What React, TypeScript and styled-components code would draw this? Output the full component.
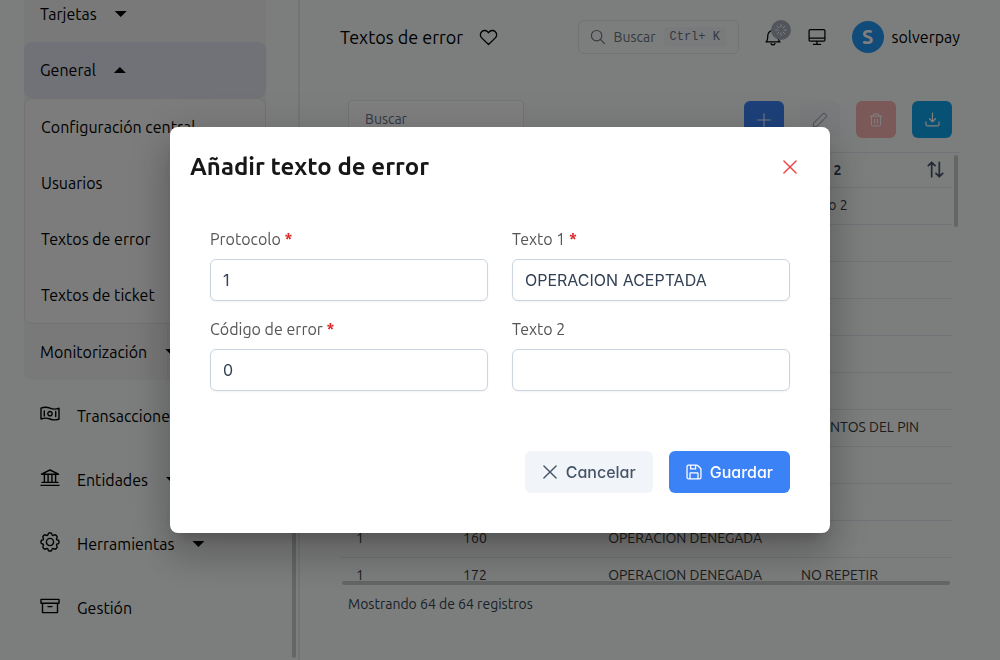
import React from 'react';
import styled, { createGlobalStyle, css } from 'styled-components';

const ui = `'Ubuntu', 'Noto Sans', sans-serif`;
const inter = `'Inter', sans-serif`;

const GlobalStyle = createGlobalStyle`
  *, *::before, *::after { box-sizing: border-box; }
  html, body, #root { height: 100%; }
  body { margin: 0; overflow: hidden; background: #f9fcfa; color: #000; font: 16px/24px ${ui}; }
  button, input { font: inherit; color: inherit; }
`;

const Page = styled.div`
  display: flex;
  height: 100%;
  overflow: hidden;
`;

const Sidebar = styled.aside`
  display: flex;
  flex: 0 0 300px;
  border-right: 2px solid #e9ebeb;
`;

const Nav = styled.nav`
  flex: 1;
  padding: 0 26px 0 24px;
  overflow: hidden;
`;

const SideTrack = styled.div`
  display: flex;
  flex-direction: column;
  justify-content: flex-end;
  width: 6px;
  padding-bottom: 2px;
`;

const SideThumb = styled.div`
  width: 4px;
  height: 20%;
  min-height: 180px;
  border-radius: 2px;
  background: #c8caca;
`;

const Group = styled.div`
  margin-bottom: 8px;
  background: #f3f3f3;
  border-radius: 0 0 8px 8px;
`;

const NavItem = styled.button<{ $active?: boolean; $first?: boolean }>`
  display: flex;
  align-items: center;
  gap: 18px;
  width: 100%;
  height: 56px;
  padding: 0 16px;
  border: 0;
  border-radius: 8px;
  background: ${(p) => (p.$active ? '#e0e5f0' : 'transparent')};
  text-align: left;
  ${(p) =>
    p.$first &&
    css`
      height: 42px;
      padding-bottom: 14px;
    `}
`;

const SubMenu = styled.div`
  border: 1px solid #e8e3e3;
  border-radius: 8px;
  background: #f9f9f9;
`;

const SubLink = styled.a`
  display: flex;
  align-items: center;
  height: 56px;
  padding: 0 16px;
  color: inherit;
  text-decoration: none;
`;

const MainItem = styled(NavItem)`
  margin-bottom: 8px;
`;

const NavIcon = styled.span`
  display: flex;
  width: 19px;
  padding-bottom: 4px;
`;

const Caret = styled.span<{ $up?: boolean }>`
  width: 12px;
  height: 6px;
  background: #000;
  clip-path: ${(p) => (p.$up ? 'polygon(0 100%, 50% 0, 100% 100%)' : 'polygon(0 0, 100% 0, 50% 100%)')};
`;

const Main = styled.main`
  flex: 1;
  min-width: 0;
  padding: 0 40px;
`;

const Header = styled.header`
  display: flex;
  align-items: center;
  height: 74px;
`;

const Heading = styled.h1`
  margin: 0 16px 0 0;
  font-size: 18px;
  font-weight: 400;
  white-space: nowrap;
`;

const IconButton = styled.button<{ $danger?: boolean }>`
  display: flex;
  padding: 0;
  border: 0;
  background: none;
  color: ${(p) => (p.$danger ? '#ef4444' : 'inherit')};
`;

const Search = styled.button`
  display: flex;
  align-items: center;
  gap: 8px;
  width: 161px;
  height: 34px;
  margin-left: auto;
  padding: 0 11px;
  border: 1px solid #e2e8e8;
  border-radius: 6px;
  background: transparent;
  color: #6b7280;
  font-size: 14px;
`;

const Keys = styled.kbd`
  padding: 0 6px;
  border-radius: 4px;
  background: #f3f4f6;
  font: 12px/20px 'Liberation Mono', monospace;
  white-space: pre;
`;

const Bell = styled(IconButton)`
  position: relative;
  margin: 0 26px 0 25px;
`;

const Badge = styled.span`
  position: absolute;
  top: -8px;
  right: -9px;
  display: flex;
  align-items: center;
  justify-content: center;
  width: 20px;
  height: 20px;
  border-radius: 50%;
  background: #a4abb8;
  color: #fff;
`;

const User = styled.div`
  display: flex;
  align-items: center;
  gap: 8px;
  margin-left: 26px;
`;

const Avatar = styled.span`
  display: flex;
  align-items: center;
  justify-content: center;
  width: 32px;
  height: 32px;
  border-radius: 50%;
  background: #2196f3;
  color: #fff;
  font-size: 20px;
  font-weight: 700;
`;

const Toolbar = styled.div`
  display: flex;
  gap: 16px;
  height: 78px;
  padding: 26px 8px 0;
`;

const Filter = styled.input`
  width: 176px;
  height: 38px;
  margin-right: auto;
  padding: 0 16px;
  border: 1px solid #e2e8f0;
  border-radius: 4px;
  background: #fff;
  font-size: 14px;
  &::placeholder { color: #64748b; opacity: 1; }
`;

const Tool = styled.button<{ $bg: string; $fg?: string }>`
  display: flex;
  align-items: center;
  justify-content: center;
  width: 40px;
  height: 37px;
  margin-top: 1px;
  padding: 0;
  border: 0;
  border-radius: 6px;
  background: ${(p) => p.$bg};
  color: ${(p) => p.$fg ?? '#fff'};
`;

const TableArea = styled.div`
  display: flex;
  height: 435px;
  overflow: hidden;
  border-top: 1px solid #e2e8f0;
`;

const TableScroll = styled.div`
  flex: 1;
  min-width: 0;
  overflow: hidden;
`;

const TableThumb = styled.div`
  width: 4px;
  height: 72px;
  margin: 2px 2px 0;
  border-radius: 2px;
  background: #c8caca;
`;

const HorizontalThumb = styled.div`
  height: 4px;
  margin: -6px 10px 0 2px;
  border-radius: 2px;
  background: #c8caca;
`;

const Table = styled.table`
  width: 100%;
  border-collapse: collapse;
  table-layout: fixed;
  color: #334155;
  font-size: 14px;
  line-height: 20px;
  th { height: 34px; padding: 0 8px; font-weight: 700; }
  td { height: 37px; padding: 0 16px 2px; color: #383838; }
  th, td {
    border-bottom: 1px solid #e2e8f0;
    text-align: left;
    white-space: nowrap;
  }
`;

const SortHead = styled.span`
  display: flex;
  align-items: center;
  justify-content: space-between;
  svg { color: #475569; }
`;

const Count = styled.p`
  margin: 7px 8px 0;
  color: #334155;
  font-size: 14px;
`;

const Backdrop = styled.div`
  position: fixed;
  inset: 0;
  display: flex;
  align-items: center;
  justify-content: center;
  background: rgba(0, 0, 0, 0.5);
`;

const Dialog = styled.div`
  width: 66%;
  min-width: 560px;
  border-radius: 8px;
  background: #fff;
  box-shadow: 0 11px 15px -7px rgba(0, 0, 0, 0.2), 0 24px 38px 3px rgba(0, 0, 0, 0.14), 0 9px 46px 8px rgba(0, 0, 0, 0.12);
`;

const DialogHead = styled.div`
  display: flex;
  align-items: center;
  justify-content: space-between;
  height: 80px;
  padding: 0 32px 0 20px;
`;

const Title = styled.h2`
  margin: 0;
  color: #171717;
  font-size: 24px;
  font-weight: 700;
  line-height: 32px;
`;

const Form = styled.form`
  padding: 20px 40px 40px;
`;

const Fields = styled.div`
  display: grid;
  grid-template-columns: 1fr 1fr;
  gap: 16px 24px;
`;

const Field = styled.div`
  display: flex;
  flex-direction: column;
  gap: 8px;
`;

const Label = styled.label`
  color: #555;
`;

const Required = styled.span`
  color: #dc2626;
  font-weight: 700;
`;

const Input = styled.input`
  width: 100%;
  height: 42px;
  padding: 0 12px;
  border: 1px solid #cbd5e1;
  border-radius: 6px;
  background: #fff;
  box-shadow: 0 1px 2px rgba(18, 18, 23, 0.05);
  color: #334155;
  font: 16px/24px ${inter};
  font-feature-settings: 'cv02', 'cv03', 'cv04', 'cv11';
  outline: 0;
`;

const Actions = styled.div`
  display: flex;
  justify-content: flex-end;
  gap: 16px;
  margin-top: 60px;
`;

const ActionButton = styled.button<{ $primary?: boolean }>`
  display: flex;
  align-items: center;
  gap: 8px;
  height: 42px;
  padding: 0 17px;
  border: 0;
  border-radius: 6px;
  background: ${(p) => (p.$primary ? '#3b82f6' : '#f1f5f9')};
  color: ${(p) => (p.$primary ? '#fff' : '#475569')};
  font: 500 16px/24px ${inter};
  font-feature-settings: 'cv02', 'cv03', 'cv04', 'cv11';
`;

const paths = {
  heart: 'M10 17.3 L2.8 10.4 A4.4 4.4 0 0 1 2.8 4 A4.4 4.4 0 0 1 9.1 4 L10 5 L10.9 4 A4.4 4.4 0 0 1 17.2 4 A4.4 4.4 0 0 1 17.2 10.4 Z',
  search: 'M8.3 1.8 a6.5 6.5 0 1 0 0 13 a6.5 6.5 0 0 0 0 -13 M13 13 L18.2 18.2',
  bell: 'M2.2 15.5 H17.8 C15.8 13.8 15.8 11.8 15.8 8.5 A5.8 5.8 0 0 0 4.2 8.5 C4.2 11.8 4.2 13.8 2.2 15.5 Z M7.8 17.2 A2.3 2.3 0 0 0 12.2 17.2 M10 1.3 V2.8',
  spinner: 'M10 1 V5 M10 15 V19 M1 10 H5 M15 10 H19 M3.6 3.6 L6.4 6.4 M13.6 13.6 L16.4 16.4 M3.6 16.4 L6.4 13.6 M13.6 6.4 L16.4 3.6',
  desktop: 'M2.5 1.8 H17.5 Q18.8 1.8 18.8 3.1 V13.3 Q18.8 14.6 17.5 14.6 H2.5 Q1.2 14.6 1.2 13.3 V3.1 Q1.2 1.8 2.5 1.8 Z M1.2 11.3 H18.8 M10 14.6 V18.2 M6 18.2 H14',
  plus: 'M10 1 V19 M1 10 H19',
  pencil: 'M2 14 L13.6 2.4 Q15 1 16.4 2.4 L17.6 3.6 Q19 5 17.6 6.4 L6 18 L1.5 18.6 Z',
  trash: 'M1.5 4.5 H18.5 M6 4.5 V2.5 Q6 1.5 7 1.5 H13 Q14 1.5 14 2.5 V4.5 M3.5 4.5 V17 Q3.5 18.5 5 18.5 H15 Q16.5 18.5 16.5 17 V4.5 M8 9 V14.5 M12 9 V14.5',
  download: 'M10 1.5 V13 M6 9 L10 13 L14 9 M1.3 13 V16.5 Q1.3 18.5 3.3 18.5 H16.7 Q18.7 18.5 18.7 16.5 V13',
  sort: 'M5.5 18.5 V1.5 M1.5 5.5 L5.5 1.5 L9.5 5.5 M14.5 1.5 V18.5 M10.5 14.5 L14.5 18.5 L18.5 14.5',
  close: 'M2.4 2.4 L17.6 17.6 M17.6 2.4 L2.4 17.6',
  save: 'M3.2 1.3 H13 Q14 1.3 14.6 1.9 L18 5.3 Q18.7 6 18.7 7 V16.8 Q18.7 18.7 16.8 18.7 H3.2 Q1.3 18.7 1.3 16.8 V3.2 Q1.3 1.3 3.2 1.3 Z M5 18.5 V12 Q5 11 6 11 H14 Q15 11 15 12 V18.5 M5.8 1.5 V6.2 H12 V1.5',
  money: 'M1 4.2 Q5.5 2.4 10 4.2 T19 4.2 V15 Q14.5 16.8 10 15 T1 15 Z M10 7.5 A2.2 2.2 0 1 0 10 11.9 A2.2 2.2 0 1 0 10 7.5 M4.3 7 V12 M15.7 7.5 V12.5',
  bank: 'M1.5 6.2 L10 2 L18.5 6.2 Z M4.4 6.4 V14 M8.1 6.4 V14 M11.9 6.4 V14 M15.6 6.4 V14 M2 14.4 H18 M1 17.4 H19',
  box: 'M1 3.4 H19 V7.2 H1 Z M2.5 7.2 V16.6 H17.5 V7.2 M8 10.6 H12',
  gear: 'M8 2.6 Q8.2 1 9.2 1 H10.8 Q11.8 1 12 2.6 Q12.2 3.9 13.6 3.3 Q15 2.4 15.8 3.1 L16.9 4.2 Q17.6 5 16.7 6.4 Q16.1 7.8 17.4 8 Q19 8.2 19 9.2 V10.8 Q19 11.8 17.4 12 Q16.1 12.2 16.7 13.6 Q17.6 15 16.9 15.8 L15.8 16.9 Q15 17.6 13.6 16.7 Q12.2 16.1 12 17.4 Q11.8 19 10.8 19 H9.2 Q8.2 19 8 17.4 Q7.8 16.1 6.4 16.7 Q5 17.6 4.2 16.9 L3.1 15.8 Q2.4 15 3.3 13.6 Q3.9 12.2 2.6 12 Q1 11.8 1 10.8 V9.2 Q1 8.2 2.6 8 Q3.9 7.8 3.3 6.4 Q2.4 5 3.1 4.2 L4.2 3.1 Q5 2.4 6.4 3.3 Q7.8 3.9 8 2.6 Z M10 6.4 A3.6 3.6 0 1 0 10 13.6 A3.6 3.6 0 1 0 10 6.4',
};

type IconName = keyof typeof paths;

function Icon({ name, size = 18, weight = 1.4 }: { name: IconName; size?: number; weight?: number }) {
  return (
    <svg width={size} height={size} viewBox="0 0 20 20" fill="none" stroke="currentColor" strokeWidth={weight} strokeLinecap="round" strokeLinejoin="round" overflow="visible" aria-hidden="true">
      <path d={paths[name]} />
    </svg>
  );
}

const rows = [
  ['1', '0', 'Texto 1', 'Texto 2'],
  ['1', '100', 'OPERACION DENEGADA', ''],
  ['1', '101', 'TARJETA CADUCADA', ''],
  ['1', '102', 'OPERACION DENEGADA', ''],
  ['1', '104', 'OPERACION DENEGADA', ''],
  ['1', '105', 'OPERACION DENEGADA', ''],
  ['1', '106', 'EXCEDIDOS', 'INTENTOS DEL PIN'],
  ['1', '107', 'OPERACION DENEGADA', ''],
  ['1', '109', 'OPERACION DENEGADA', ''],
  ['1', '160', 'OPERACION DENEGADA', ''],
  ['1', '172', 'OPERACION DENEGADA', 'NO REPETIR'],
];

const Col = styled.col<{ $share: number }>`
  width: ${(p) => p.$share}%;
`;

const sections: { icon: IconName; label: string; caret: boolean }[] = [
  { icon: 'money', label: 'Transacciones', caret: true },
  { icon: 'bank', label: 'Entidades', caret: true },
  { icon: 'gear', label: 'Herramientas', caret: true },
  { icon: 'box', label: 'Gestión', caret: false },
];

const fields = [
  { id: 'protocolo', label: 'Protocolo', required: true, value: '1' },
  { id: 'texto1', label: 'Texto 1', required: true, value: 'OPERACION ACEPTADA' },
  { id: 'codigo', label: 'Código de error', required: true, value: '0' },
  { id: 'texto2', label: 'Texto 2', required: false, value: '' },
];

export default function App() {
  return (
    <>
      <GlobalStyle />
      <Page>
        <Sidebar>
          <Nav>
            <Group>
              <NavItem $first>Tarjetas <Caret /></NavItem>
              <NavItem $active>General <Caret $up /></NavItem>
              <SubMenu>
                {['Configuración central', 'Usuarios', 'Textos de error', 'Textos de ticket'].map((t) => (
                  <SubLink href="#" key={t}>{t}</SubLink>
                ))}
              </SubMenu>
              <NavItem>Monitorización <Caret /></NavItem>
            </Group>
            {sections.map((s) => (
              <MainItem key={s.label}>
                <NavIcon><Icon name={s.icon} size={20} weight={1.4} /></NavIcon>
                {s.label}
                {s.caret && <Caret />}
              </MainItem>
            ))}
          </Nav>
          <SideTrack><SideThumb /></SideTrack>
        </Sidebar>
        <Main>
          <Header>
            <Heading>Textos de error</Heading>
            <IconButton aria-label="Favorito"><Icon name="heart" size={19} /></IconButton>
            <Search><Icon name="search" size={16} /> Buscar <Keys>Ctrl+ K</Keys></Search>
            <Bell aria-label="Notificaciones">
              <Icon name="bell" />
              <Badge><Icon name="spinner" size={12} weight={1.6} /></Badge>
            </Bell>
            <IconButton aria-label="Pantalla"><Icon name="desktop" /></IconButton>
            <User><Avatar>S</Avatar>solverpay</User>
          </Header>
          <Toolbar>
            <Filter placeholder="Buscar" aria-label="Buscar" />
            <Tool $bg="#3b82f6" aria-label="Añadir"><Icon name="plus" size={14} /></Tool>
            <Tool $bg="#f5f7fa" $fg="#a3abb8" aria-label="Editar"><Icon name="pencil" size={16} /></Tool>
            <Tool $bg="#f6b2b2" aria-label="Eliminar"><Icon name="trash" size={14} /></Tool>
            <Tool $bg="#0ea5e9" aria-label="Descargar"><Icon name="download" size={15} weight={1.6} /></Tool>
          </Toolbar>
          <TableArea>
            <TableScroll>
              <Table>
                <colgroup>
                  <Col $share={17.5} />
                  <Col $share={23.7} />
                  <Col $share={31.5} />
                  <col />
                </colgroup>
                <thead>
                  <tr>
                    <th>Protocolo</th>
                    <th>Código</th>
                    <th>Texto 1</th>
                    <th><SortHead>Texto 2 <Icon name="sort" size={17} weight={2} /></SortHead></th>
                  </tr>
                </thead>
                <tbody>
                  {rows.map((r) => (
                    <tr key={r[1]}>{r.map((c, i) => <td key={i}>{c}</td>)}</tr>
                  ))}
                </tbody>
              </Table>
            </TableScroll>
            <TableThumb />
          </TableArea>
          <HorizontalThumb />
          <Count>Mostrando 64 de 64 registros</Count>
        </Main>
      </Page>
      <Backdrop>
        <Dialog role="dialog" aria-modal="true" aria-labelledby="dialog-title">
          <DialogHead>
            <Title id="dialog-title">Añadir texto de error</Title>
            <IconButton $danger aria-label="Cerrar"><Icon name="close" size={16} weight={1.8} /></IconButton>
          </DialogHead>
          <Form>
            <Fields>
              {fields.map((f) => (
                <Field key={f.id}>
                  <Label htmlFor={f.id}>{f.label} {f.required && <Required>*</Required>}</Label>
                  <Input id={f.id} defaultValue={f.value} />
                </Field>
              ))}
            </Fields>
            <Actions>
              <ActionButton type="button"><Icon name="close" size={16} weight={1.8} />Cancelar</ActionButton>
              <ActionButton type="submit" $primary><Icon name="save" size={16} weight={1.6} />Guardar</ActionButton>
            </Actions>
          </Form>
        </Dialog>
      </Backdrop>
    </>
  );
}
